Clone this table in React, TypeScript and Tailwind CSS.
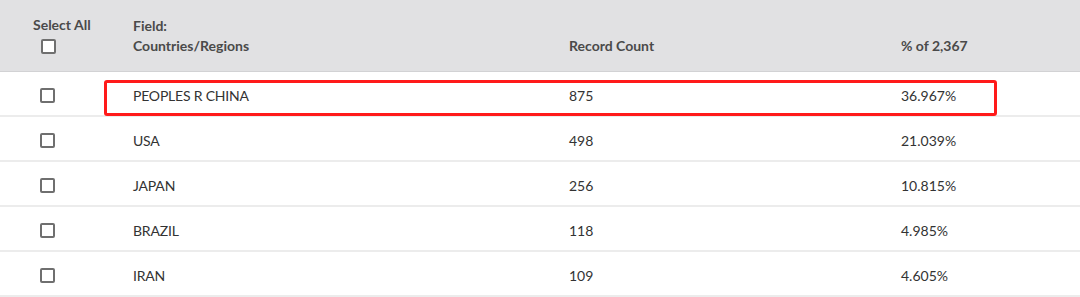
import React from "react";

const rows = [
  ["PEOPLES R CHINA", "875", "36.967%"],
  ["USA", "498", "21.039%"],
  ["JAPAN", "256", "10.815%"],
  ["BRAZIL", "118", "4.985%"],
  ["IRAN", "109", "4.605%"],
];

function Box() {
  return <div className="w-[15px] h-[15px] border-[2px] border-[#6f6f6f] rounded-[2px] bg-white" />;
}

export default function App() {
  return (
    <div
      className="relative w-[1080px] h-[297px] bg-white overflow-hidden text-[14px] text-[#333]"
      style={{ fontFamily: "Lato, 'Noto Sans', sans-serif" }}
    >
      <div className="grid grid-cols-[133px_436px_332px_1fr] h-[72px] bg-[#e1e1e3] border-b border-[#d2d2d4] font-bold text-[#4a4a4a]">
        <div className="pl-[33px] pt-[16px] flex flex-col">
          <span className="leading-[18px]">Select All</span>
          <div className="pl-[8px] mt-[5px]">
            <Box />
          </div>
        </div>
        <div className="pt-[16px] leading-[20px]">
          <div>Field:</div>
          <div>Countries/Regions</div>
        </div>
        <div className="pt-[36px] leading-[20px]">Record Count</div>
        <div className="pt-[36px] leading-[20px]">% of 2,367</div>
      </div>
      {rows.map((r, i) => (
        <div
          key={i}
          className="grid grid-cols-[133px_436px_332px_1fr] h-[45px] pt-[3px] items-center border-b-[2px] border-[#ececec]"
        >
          <div className="pl-[40px]">
            <Box />
          </div>
          <div className="tracking-[-0.2px]">{r[0]}</div>
          <div>{r[1]}</div>
          <div>{r[2]}</div>
        </div>
      ))}
      <div className="absolute left-[104px] top-[80px] w-[893px] h-[36px] border-[3px] border-[#ff1a1a] rounded-[3px]" />
    </div>
  );
}
